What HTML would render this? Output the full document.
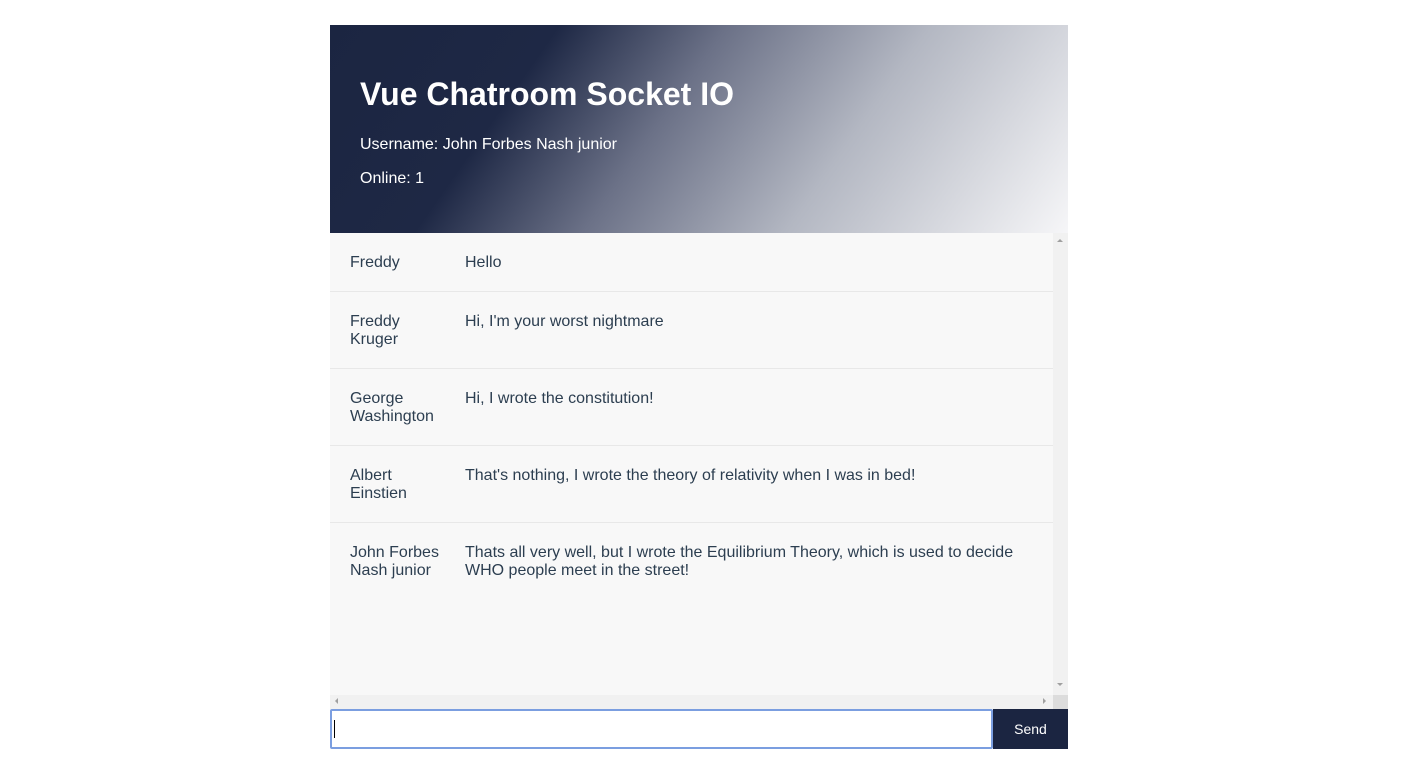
<!DOCTYPE html>
<html><head><style>
body{margin:0;background:#fff;font-family:"Liberation Sans",sans-serif;width:1412px;height:762px;overflow:hidden;position:relative}
.hdr{position:absolute;left:330px;top:25px;width:738px;height:208px;background:linear-gradient(125deg,#1b2541 0%,#1e2845 26%,#6b7187 45%,#b3b7c2 68%,#f6f6f8 100%);color:#fff}
.hdr h1{position:absolute;left:30px;top:51px;margin:0;font-size:32px;font-weight:bold}
.hdr .u{position:absolute;left:30px;top:111px;font-size:16px}
.hdr .o{position:absolute;left:30px;top:145px;font-size:16px}
.chat{position:absolute;left:330px;top:233px;width:723px;height:462px;background:#f8f8f8;color:#2c3e50;font-size:16px}
.row{display:flex;border-bottom:1px solid #e8e8e8;padding:21px 20px 19px;line-height:18px}
.row .n{width:115px}
.row .m{flex:1}
.vs{position:absolute;left:1053px;top:233px;width:15px;height:462px;background:#f1f1f1}
.hs{position:absolute;left:330px;top:695px;width:723px;height:14px;background:#f1f1f1}
.corner{position:absolute;left:1053px;top:695px;width:15px;height:14px;background:#dcdcdc}
.inp{position:absolute;left:330px;top:709px;width:659px;height:36px;border:2px solid #7b9ee0;border-radius:2px;background:#fff}
.inp:after{content:"";position:absolute;left:2px;top:9px;width:1px;height:18px;background:#000}
.btn{position:absolute;left:993px;top:709px;width:75px;height:40px;background:#1b2541;color:#fff;font-size:14px;text-align:center;line-height:40px}
.tri{position:absolute;width:0;height:0;border:3px solid transparent}
</style></head><body>
<div class="hdr"><h1>Vue Chatroom Socket IO</h1><div class="u">Username: John Forbes Nash junior</div><div class="o">Online: 1</div></div>
<div class="chat">
<div class="row"><div class="n">Freddy</div><div class="m">Hello</div></div>
<div class="row"><div class="n">Freddy<br>Kruger</div><div class="m">Hi, I'm your worst nightmare</div></div>
<div class="row"><div class="n">George<br>Washington</div><div class="m">Hi, I wrote the constitution!</div></div>
<div class="row"><div class="n">Albert<br>Einstien</div><div class="m">That's nothing, I wrote the theory of relativity when I was in bed!</div></div>
<div class="row" style="border:none"><div class="n">John Forbes<br>Nash junior</div><div class="m">Thats all very well, but I wrote the Equilibrium Theory, which is used to decide WHO people meet in the street!</div></div>
</div>
<div class="vs"></div><div class="hs"></div><div class="corner"></div>
<div class="tri" style="left:1057px;top:236px;border-bottom-color:#a0a0a0"></div>
<div class="tri" style="left:1057px;top:683px;border-top-color:#a0a0a0"></div>
<div class="tri" style="left:332px;top:698px;border-right-color:#a0a0a0"></div>
<div class="tri" style="left:1043px;top:698px;border-left-color:#a0a0a0"></div>
<div class="inp"></div>
<div class="btn">Send</div>
</body></html>
